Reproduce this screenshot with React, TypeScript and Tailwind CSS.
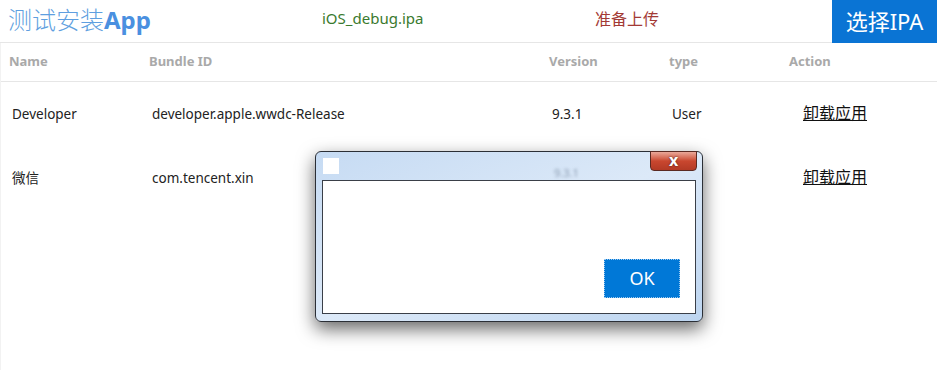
import React from 'react';

type AppRow = {
  name: string;
  bundleId: string;
  version: string;
  type: string;
};

const rows: AppRow[] = [
  { name: 'Developer', bundleId: 'developer.apple.wwdc-Release', version: '9.3.1', type: 'User' },
  { name: '微信', bundleId: 'com.tencent.xin', version: '', type: '' },
];

const font = { fontFamily: '"Noto Sans", "Noto Sans CJK SC", sans-serif' };

const AlertDialog: React.FC = () => (
  <div className="absolute left-[315px] top-[151px] w-[388px] h-[171px] rounded-[6px] border border-[#2b2f36] bg-gradient-to-br from-[#c6dbf3] via-[#dce9f8] to-[#bdd5f0] shadow-[0_7px_18px_rgba(0,0,0,0.6)] px-[6px] pb-[7px] flex flex-col">
    {/* Title bar */}
    <div className="relative h-[28px] flex items-start">
      <div className="mt-[6px] ml-[1px] w-[16px] h-[16px] bg-white" />
      <span className="absolute left-[232px] top-[13px] text-[11px] text-[#8a9bb0] blur-[1.5px]">9.3.1</span>
      <button className="absolute right-[-1px] top-[-1px] w-[47px] h-[20px] rounded-b-[4px] border border-[#5b2a22] bg-gradient-to-b from-[#e9a899] via-[#c9472f] to-[#b33a25] flex items-center justify-center">
        <span className="text-white text-[16px] font-bold leading-none -mt-[3px] [text-shadow:0_0_2px_#3a1a14]">x</span>
      </button>
    </div>
    {/* Content */}
    <div className="flex-1 bg-white border border-[#3a3f48] relative">
      <button className="absolute left-[281px] top-[78px] w-[76px] h-[39px] bg-[#0078d7] border border-dotted border-[#9cc8ef] text-white text-[18px] flex items-center justify-center">
        OK
      </button>
    </div>
  </div>
);

const App: React.FC = () => {
  return (
    <div className="relative w-[937px] h-[370px] bg-white overflow-hidden" style={font}>
      {/* Header */}
      <div className="flex items-center h-[43px] border-b border-[#e6e6e6]">
        <div className="w-[322px] pl-[8px] text-[24px] text-[#5f9fe0] leading-none -mt-[3px]">
          <span className="font-light">测试安装</span>
          <span className="font-bold text-[#4a90e0]">App</span>
        </div>
        <div className="w-[273px] text-[15px] text-[#3a7a2e] -mt-[5px]">iOS_debug.ipa</div>
        <div className="flex-1 text-[16px] text-[#a33a35] -mt-[5px]">准备上传</div>
        <button className="w-[105px] h-[43px] bg-[#0a74d4] text-white text-[22px] self-start">选择IPA</button>
      </div>

      <div className="border-l border-[#f2f2f2] h-full">
        {/* Table head */}
        <div className="flex items-center h-[39px] border-b border-[#e6e6e6] pl-[8px] text-[13px] font-bold text-[#a9a9a9]">
          <div className="w-[140px]">Name</div>
          <div className="w-[400px]">Bundle ID</div>
          <div className="w-[120px]">Version</div>
          <div className="w-[120px]">type</div>
          <div>Action</div>
        </div>

        {/* Table body */}
        {rows.map((row) => (
          <div key={row.bundleId} className="flex items-center h-[64px] pl-[11px] text-[13.5px] text-[#222]">
            <div className="w-[140px]">{row.name}</div>
            <div className="w-[400px]">{row.bundleId}</div>
            <div className="w-[120px]">{row.version}</div>
            <div className="w-[131px]">{row.type}</div>
            <a className="underline text-[16px] text-[#111] -mt-[2px]">卸载应用</a>
          </div>
        ))}
      </div>

      <AlertDialog />
    </div>
  );
};

export default App;
